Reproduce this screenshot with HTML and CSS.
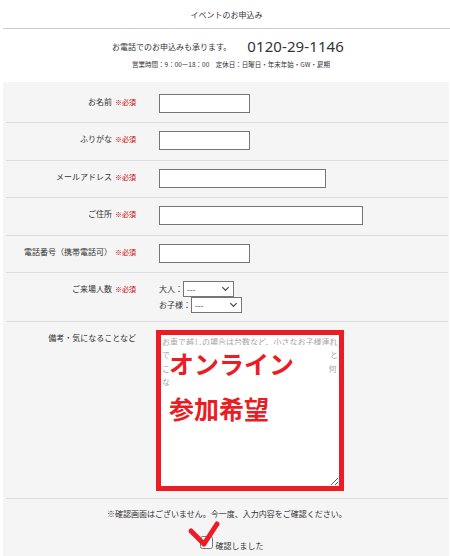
FILE: index.html
```html
<!DOCTYPE html>
<html lang="ja">
<head>
<meta charset="utf-8"/>
<meta content="width=device-width, initial-scale=1.0" name="viewport"/>
<title>イベントのお申込み</title>
<link rel="stylesheet" href="styles.css">
</head>
<body>
<div class="head">
  <h1 class="title">イベントのお申込み</h1>
</div>

<div class="tel">
  <p class="tel-line"><span class="tel-lead">お電話でのお申込みも承ります。</span><span class="tel-num">0120-29-1146</span></p>
  <p class="tel-hours">営業時間：9：00ー18：00　定休日：日曜日・年末年始・GW・夏期</p>
</div>

<form class="entry">
  <div class="row">
    <div class="row-label">お名前<span class="req">※必須</span></div>
    <div class="row-field"><input class="text size-s" type="text"/></div>
  </div>
  <div class="row">
    <div class="row-label">ふりがな<span class="req">※必須</span></div>
    <div class="row-field"><input class="text size-s" type="text"/></div>
  </div>
  <div class="row">
    <div class="row-label">メールアドレス<span class="req">※必須</span></div>
    <div class="row-field"><input class="text size-m" type="email"/></div>
  </div>
  <div class="row">
    <div class="row-label">ご住所<span class="req">※必須</span></div>
    <div class="row-field"><input class="text size-l" type="text"/></div>
  </div>
  <div class="row">
    <div class="row-label">電話番号（携帯電話可）<span class="req">※必須</span></div>
    <div class="row-field"><input class="text size-s" type="tel"/></div>
  </div>
  <div class="row row-people">
    <div class="row-label">ご来場人数<span class="req">※必須</span></div>
    <div class="row-field">
      <label class="people">大人：<span class="pick"><select class="count"><option>---</option><option>1</option><option>2</option><option>3</option></select></span></label>
      <label class="people">お子様：<span class="pick"><select class="count"><option>---</option><option>0</option><option>1</option><option>2</option></select></span></label>
    </div>
  </div>
  <div class="row row-memo">
    <div class="row-label">備考・気になることなど</div>
    <div class="row-field">
      <div class="memo">
        <textarea class="memo-box" placeholder="お車で越しの場合は台数など、小さなお子様連れでご来場の場合はその旨をご記入いただけますとこちらで準備いたします。その他ご質問など、何なりとお書きください。"></textarea>
        <div class="memo-note">
          <p class="memo-line">オンライン</p>
          <p class="memo-line second">参加希望</p>
        </div>
      </div>
    </div>
  </div>
  <div class="confirm">
    <p class="confirm-note">※確認画面はございません。今一度、入力内容をご確認ください。</p>
    <div class="confirm-check">
      <label class="check"><input class="check-box" type="checkbox"/><span class="check-text">確認しました</span></label>
      <svg class="check-mark" width="36" height="30" viewBox="0 0 36 30"><path d="M5 11 L18 24 L31 4" fill="none" stroke="#ec1c24" stroke-width="5" stroke-linecap="round" stroke-linejoin="round"/></svg>
    </div>
  </div>
</form>
</body>
</html>
```

FILE: styles.css
```css
body { margin: 0; font-family: "Noto Sans CJK JP", sans-serif; color: #333; background: #fff; }
p { margin: 0; }

.head { margin-left: 3px; padding: 9px 0 7px; border-bottom: 1px solid #ccc; text-align: center; }
.title { margin: 0; font-size: 8px; font-weight: normal; line-height: 12px; }

.tel { margin-top: 7px; text-align: center; }
.tel-line { display: flex; justify-content: center; align-items: center; height: 20px; padding-left: 6px; }
.tel-lead { font-size: 8px; }
.tel-num { margin-left: 16px; font-family: "Noto Sans", sans-serif; font-size: 15px; letter-spacing: 0.1px; }
.tel-hours { margin-top: 3px; font-size: 6.5px; line-height: 10px; padding-left: 12px; }

.entry { margin: 13px 1px 0 3px; padding: 3.5px 1px 0 3px; background: #f5f5f5; min-height: 480px; }
.row { display: grid; grid-template-columns: 130px 1fr; column-gap: 23px; padding: 8px 0 9.5px; border-bottom: 1px solid #ddd; }
.row-label { padding-top: 2px; font-size: 8px; line-height: 12px; text-align: right; }
.req { margin-left: 3px; font-size: 7px; color: #c00; }
.row-field { font-size: 8px; }

.text { display: block; height: 19px; box-sizing: border-box; margin: 0; padding: 0 2px; border: 1px solid #767676; border-radius: 0; background: #fff; font-size: 8px; }
.size-s { width: 91px; }
.size-m { width: 167px; }
.size-l { width: 204px; }

.row-people { padding-bottom: 7.5px; }
.people { display: flex; align-items: center; height: 16px; line-height: 12px; }
.pick { position: relative; display: block; height: 16px; }
.pick::after { content: ""; position: absolute; right: 6px; top: 4px; width: 4px; height: 4px; border-right: 1px solid #333; border-bottom: 1px solid #333; transform: rotate(45deg); pointer-events: none; }
.count { display: block; width: 51px; height: 16px; margin: 0; padding: 0 0 0 3px; border: 1px solid #767676; border-radius: 0; background: #fff; font-family: "Noto Sans CJK JP", sans-serif; font-size: 8px; color: #333; appearance: none; -webkit-appearance: none; }

.row-memo { padding: 8.5px 0 7px; }
.memo { position: relative; width: 188px; margin-left: -3px; }
.memo-box { display: block; width: 188px; height: 161px; box-sizing: border-box; margin: 0; padding: 0 0 0 1px; border: 5px solid #ec1c24; border-radius: 0; background: #fff; font-family: "Noto Sans CJK JP", sans-serif; font-size: 8px; line-height: 13.25px; resize: both; }
.memo-box::placeholder { color: #a5a5a5; }
.memo-note { position: absolute; left: 13px; top: 15px; width: 160px; background: #fff; color: #ec1c24; font-size: 25px; font-weight: bold; line-height: 36px; }
.memo-line.second { margin-top: 9px; padding-bottom: 6px; }

.confirm { padding-top: 9px; text-align: center; }
.confirm-note { font-size: 8px; line-height: 12px; }
.confirm-check { position: relative; display: inline-block; margin: 16px 0 0 9px; }
.check { display: flex; align-items: flex-start; }
.check-box { width: 13px; height: 13px; margin: 0; }
.check-text { margin-left: 3px; padding-top: 4px; font-size: 8px; line-height: 12px; }
.check-mark { position: absolute; left: -14px; top: -16px; }
```
